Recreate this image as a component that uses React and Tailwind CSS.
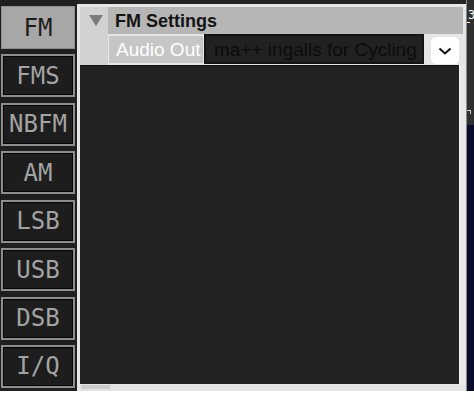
import React from "react";

const modes = ["FM", "FMS", "NBFM", "AM", "LSB", "USB", "DSB", "I/Q"];

function ModeButton({ label, active }) {
  if (active) {
    return (
      <div className="h-[43px] w-full flex items-center justify-center bg-[#a7a7a7] border border-[#8e8e8e] text-[#1c1c1c] text-[24px] leading-none" style={{ fontFamily: '"DejaVu Sans Mono", monospace' }}>
        {label}
      </div>
    );
  }
  return (
    <div className="h-[43px] w-full flex items-center justify-center bg-[#1d1d1d] border-2 border-[#8d8d8d] shadow-[inset_0_0_0_1px_#050505] text-[#a3a3a3] text-[24px] leading-none" style={{ fontFamily: '"DejaVu Sans Mono", monospace' }}>
      {label}
    </div>
  );
}

export default function App() {
  return (
    <div className="w-[474px] h-[402px] bg-white overflow-hidden" style={{ fontFamily: '"Liberation Sans", Arial, sans-serif' }}>
      <div className="h-[391px] flex bg-[#242424]">
        {/* left mode column */}
        <div className="w-[77px] shrink-0 pt-[6px] pb-[3px] pl-[1px] pr-[2px] flex flex-col justify-between bg-[#1f1f1f]">
          {modes.map((m, i) => (
            <ModeButton key={m} label={m} active={i === 0} />
          ))}
        </div>

        {/* settings panel */}
        <div className="w-[389px] shrink-0 mt-[4px] flex flex-col bg-[#e6e6e6] pl-[3px] pt-[3px]">
          <div className="h-[58px] flex">
            <div className="w-[28px] bg-[#d2d2d2] pt-[8px] pl-[9px]">
              <svg width="14" height="11" viewBox="0 0 14 11">
                <polygon points="0,0 14,0 7,11" fill="#7b7b7b" />
              </svg>
            </div>
            <div className="w-[355px] flex flex-col">
              <div className="h-[27px] bg-[#b6b6b6] flex items-center pl-[7px] pt-[1px]">
                <span className="text-[18px] font-bold text-[#141414] leading-none">FM Settings</span>
              </div>
              <div className="h-[31px] flex items-start">
                <div className="ml-[1px] mt-[2px] w-[94px] h-[27px] bg-[#c6c6c6] flex items-center pl-[7px]">
                  <span className="text-[19px] text-white leading-none whitespace-nowrap">Audio Out</span>
                </div>
                <div className="ml-[1px] w-[220px] h-[30px] border-2 border-[#141414] bg-[#212121] flex items-center pl-[8px] overflow-hidden">
                  <span className="text-[19px] text-[#0c0c0c] leading-none whitespace-nowrap">ma++ ingalls for Cycling</span>
                </div>
                <div className="ml-[7px] mt-[3px] w-[28px] h-[27px] bg-white rounded-[5px] flex items-center justify-center">
                  <svg width="14" height="8" viewBox="0 0 14 8">
                    <polyline points="1.5,1.5 7,6.5 12.5,1.5" fill="none" stroke="#111" strokeWidth="2" />
                  </svg>
                </div>
              </div>
            </div>
          </div>
          <div className="flex h-[319px]">
            <div className="w-[379px] bg-[#222222] border-t border-[#121212]" />
            <div className="w-[7px] bg-[#e8e8e8] border-l border-[#f2f2f2]" />
          </div>
          <div className="h-[7px] bg-[#e4e4e4] pt-[1px] pl-[1px]">
            <div className="w-[29px] h-[4px] bg-[#cdcdcd]" />
          </div>
        </div>

        {/* clipped neighbour widget */}
        <div className="w-[8px] shrink-0 flex flex-col border-l border-[#8a8a8a]">
          <div className="h-[125px] bg-[#2f2f2f] relative overflow-hidden">
            <span className="absolute left-[1px] top-[9px] text-[12px] leading-none text-white" style={{ fontFamily: '"DejaVu Sans Mono", monospace' }}>3</span>
            <div className="absolute left-0 top-[22px] w-[3px] h-[1px] bg-white" />
            <div className="absolute left-0 top-[110px] w-[4px] h-[1px] bg-[#cfcfcf]" />
            <div className="absolute left-[3px] top-[110px] w-[1px] h-[4px] bg-[#cfcfcf]" />
          </div>
          <div className="flex-1 bg-[#0b0b2e]" />
        </div>
      </div>
    </div>
  );
}
